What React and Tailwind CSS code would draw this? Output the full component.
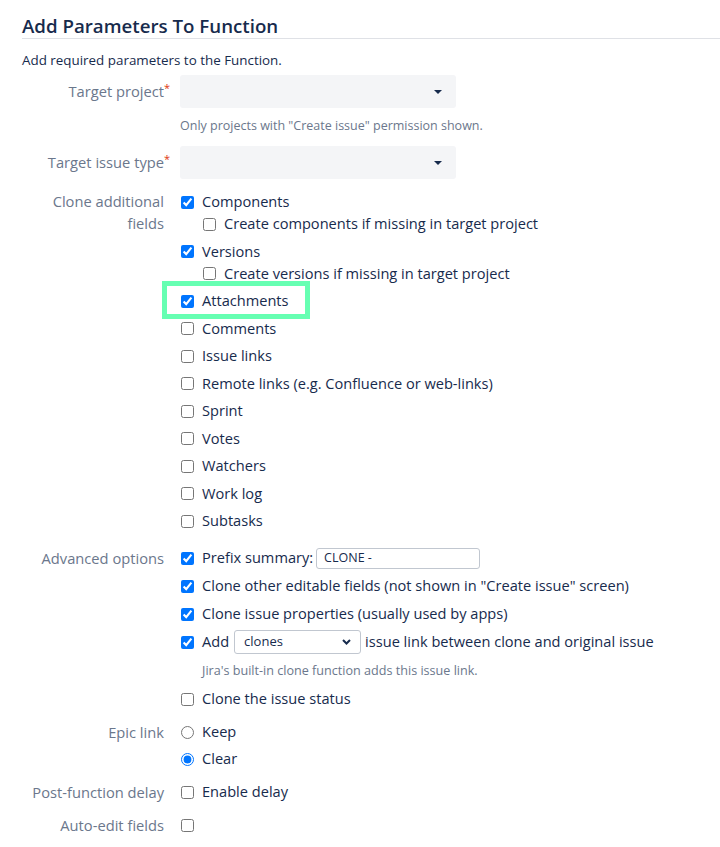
import React from "react";

const TEXT = "text-[#172B4D]";

function Box({ checked }) {
  return (
    <input
      type="checkbox"
      defaultChecked={checked}
      className="m-0 ml-[1px] h-[13px] w-[13px] shrink-0"
    />
  );
}

function CheckRow({ checked, children, nested }) {
  return (
    <div
      className={
        nested
          ? "flex h-[22px] items-center gap-2 pl-[22px]"
          : "flex h-[22px] items-center gap-2"
      }
    >
      <Box checked={checked} />
      {children ? <span className={TEXT}>{children}</span> : null}
    </div>
  );
}

function Radio({ checked, children }) {
  return (
    <div className="flex h-[22px] items-center gap-2">
      <input
        type="radio"
        name="epic"
        defaultChecked={checked}
        className="m-0 ml-[1px] h-[13px] w-[13px] shrink-0"
      />
      <span className={TEXT}>{children}</span>
    </div>
  );
}

function Label({ children, required, tall }) {
  return (
    <div
      className={
        tall
          ? "text-right text-[14.7px] leading-[33px] text-[#6B778C]"
          : "text-right text-[14.7px] leading-[22px] text-[#6B778C]"
      }
    >
      <span className="relative">
        {children}
        {required ? (
          <span className="absolute left-full top-[1px] text-[11px] leading-none text-[#DE350B]">
            *
          </span>
        ) : null}
      </span>
    </div>
  );
}

function FakeSelect() {
  return (
    <div className="flex h-[33px] w-[276px] items-center justify-end rounded-[3px] bg-[#F4F5F7] pr-[14px]">
      <svg width="8" height="4" viewBox="0 0 8 4">
        <path d="M0 0 L8 0 L4 4 Z" fill="#172B4D" />
      </svg>
    </div>
  );
}

export default function App() {
  return (
    <div className="min-h-[847px] bg-white pl-[22px] pt-[14px] font-['Open_Sans',sans-serif] text-[14.6px]">
      <h2 className="border-b border-[#DFE1E6] text-[18.7px] font-semibold leading-[24px] text-[#172B4D]">
        Add Parameters To Function
      </h2>
      <p className={"mt-[11px] text-[13.4px] leading-[20px] " + TEXT}>
        Add required parameters to the Function.
      </p>

      <div className="mt-[5px] grid grid-cols-[142px_1fr] gap-x-4">
        <Label required tall>
          Target project
        </Label>
        <div>
          <FakeSelect />
          <p className="mt-[10px] text-[12.5px] leading-[16px] text-[#6B778C]">
            Only projects with "Create issue" permission shown.
          </p>
        </div>
      </div>

      <div className="mt-[12px] grid grid-cols-[142px_1fr] gap-x-4">
        <Label required tall>
          Target issue type
        </Label>
        <FakeSelect />
      </div>

      <div className="mt-[11px] grid grid-cols-[142px_1fr] gap-x-4">
        <Label>
          Clone additional
          <br />
          fields
        </Label>
        <div className="flex flex-col gap-[5.5px] pt-[1px]">
          <div>
            <CheckRow checked>Components</CheckRow>
            <CheckRow nested>Create components if missing in target project</CheckRow>
          </div>
          <div>
            <CheckRow checked>Versions</CheckRow>
            <CheckRow nested>Create versions if missing in target project</CheckRow>
          </div>
          <div className="relative">
            <CheckRow checked>Attachments</CheckRow>
            <div className="pointer-events-none absolute -left-[18px] -top-[9px] h-[38px] w-[148px] border-[5px] border-[#66FFB2]" />
          </div>
          <CheckRow>Comments</CheckRow>
          <CheckRow>Issue links</CheckRow>
          <CheckRow>Remote links (e.g. Confluence or web-links)</CheckRow>
          <CheckRow>Sprint</CheckRow>
          <CheckRow>Votes</CheckRow>
          <CheckRow>Watchers</CheckRow>
          <CheckRow>Work log</CheckRow>
          <CheckRow>Subtasks</CheckRow>
        </div>
      </div>

      <div className="mt-[15px] grid grid-cols-[142px_1fr] gap-x-4">
        <Label>Advanced options</Label>
        <div className="flex flex-col">
          <div className="flex h-[22px] items-center gap-2">
            <Box checked />
            <span className={TEXT}>Prefix summary:</span>
            <div className="-ml-[5px] flex h-[21px] w-[164px] shrink-0 items-center rounded-[3px] border border-[#C1C7D0] pl-[7px] text-[12.5px] text-[#172B4D]">
              CLONE -
            </div>
          </div>
          <div className="mt-[6px]">
            <CheckRow checked>
              Clone other editable fields (not shown in "Create issue" screen)
            </CheckRow>
          </div>
          <div className="mt-[6px]">
            <CheckRow checked>Clone issue properties (usually used by apps)</CheckRow>
          </div>
          <div className="mt-[6px] flex h-[22px] items-center gap-2">
            <Box checked />
            <span className={TEXT}>Add</span>
            <div className="-ml-[3px] flex h-[24px] w-[127px] shrink-0 items-center justify-between rounded-[3px] border border-[#C1C7D0] pl-[9px] pr-[9px] text-[13px] text-[#172B4D]">
              <span>clones</span>
              <svg width="9" height="6" viewBox="0 0 9 6">
                <path
                  d="M1 1 L4.5 4.5 L8 1"
                  fill="none"
                  stroke="#172B4D"
                  strokeWidth="2"
                />
              </svg>
            </div>
            <span className={"-ml-[4px] " + TEXT}>
              issue link between clone and original issue
            </span>
          </div>
          <p className="mt-[10px] pl-[22px] text-[12.6px] leading-[16px] text-[#6B778C]">
            Jira's built-in clone function adds this issue link.
          </p>
          <div className="mt-[9px]">
            <CheckRow>Clone the issue status</CheckRow>
          </div>
        </div>
      </div>

      <div className="mt-[11px] grid grid-cols-[142px_1fr] gap-x-4">
        <Label>Epic link</Label>
        <div className="flex flex-col gap-[5px]">
          <Radio>Keep</Radio>
          <Radio checked>Clear</Radio>
        </div>
      </div>

      <div className="mt-[11px] grid grid-cols-[142px_1fr] gap-x-4">
        <Label>Post-function delay</Label>
        <CheckRow>Enable delay</CheckRow>
      </div>

      <div className="mt-[11px] grid grid-cols-[142px_1fr] gap-x-4">
        <Label>Auto-edit fields</Label>
        <CheckRow />
      </div>
    </div>
  );
}
